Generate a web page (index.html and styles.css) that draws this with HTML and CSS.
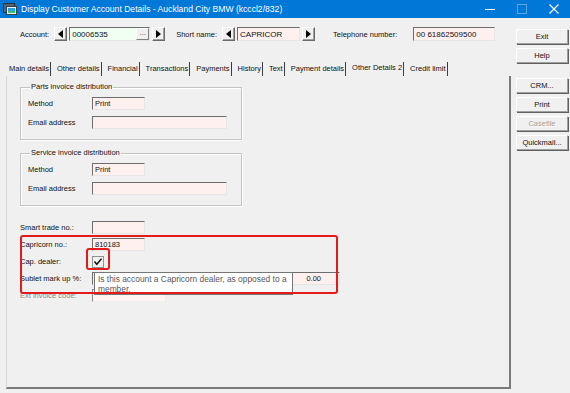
FILE: index.html
```html
<!DOCTYPE html>
<html>
<head>
<meta charset="utf-8">
<link rel="stylesheet" href="styles.css">
</head>
<body>
<div class="window">
  <div class="titlebar">
    <svg class="appicon" width="14" height="12" viewBox="0 0 14 12">
      <rect x="0.5" y="0.5" width="11" height="9" fill="#5a6470" stroke="#2a3038"/>
      <rect x="3.5" y="3.5" width="10" height="8" fill="#e8f4ff" stroke="#34404c"/>
      <rect x="5" y="5" width="7" height="5" fill="#2aa0e6"/>
      <rect x="5" y="8" width="7" height="2" fill="#3cc070"/>
    </svg>
    <span class="title">Display Customer Account Details - Auckland City BMW (kcccl2/832)</span>
    <div class="winctrls">
      <span class="wc"><svg width="10" height="10" viewBox="0 0 10 10"><line x1="0" y1="5.5" x2="10" y2="5.5" stroke="#fff" stroke-width="1"/></svg></span>
      <span class="wc"><svg width="10" height="10" viewBox="0 0 10 10"><rect x="0.5" y="0.5" width="9" height="9" fill="none" stroke="#5ea4e6" stroke-width="1"/></svg></span>
      <span class="wc"><svg width="10" height="10" viewBox="0 0 10 10"><path d="M0.5 0.5 L9.5 9.5 M9.5 0.5 L0.5 9.5" stroke="#fff" stroke-width="1.1"/></svg></span>
    </div>
  </div>

  <div class="client">
    <div class="main">
      <div class="toprow">
        <span class="lbl lbl-account">Account:</span>
        <span class="arrbtn"><svg width="5" height="8" viewBox="0 0 5 8"><polygon points="5,0 0,4 5,8" fill="#000"/></svg></span>
        <span class="field green acct">00006535<span class="dots">...</span></span>
        <span class="arrbtn"><svg width="5" height="8" viewBox="0 0 5 8"><polygon points="0,0 5,4 0,8" fill="#000"/></svg></span>
        <span class="lbl lbl-short">Short name:</span>
        <span class="arrbtn"><svg width="5" height="8" viewBox="0 0 5 8"><polygon points="5,0 0,4 5,8" fill="#000"/></svg></span>
        <span class="field short">CAPRICOR</span>
        <span class="arrbtn"><svg width="5" height="8" viewBox="0 0 5 8"><polygon points="0,0 5,4 0,8" fill="#000"/></svg></span>
        <span class="lbl lbl-tel">Telephone number:</span>
        <span class="field tel">00 61862509500</span>
      </div>

      <div class="tabs">
        <span class="tab first">Main details</span>
        <span class="tab">Other details</span>
        <span class="tab">Financial</span>
        <span class="tab">Transactions</span>
        <span class="tab">Payments</span>
        <span class="tab">History</span>
        <span class="tab">Text</span>
        <span class="tab">Payment details</span>
        <span class="tab active">Other Details 2</span>
        <span class="tab">Credit limit</span>
      </div>

      <div class="panel">
        <fieldset class="group">
          <legend>Parts invoice distribution</legend>
          <div class="grow"><span class="glbl">Method</span><span class="field method">Print</span></div>
          <div class="grow"><span class="glbl">Email address</span><span class="field email"></span></div>
        </fieldset>
        <fieldset class="group second">
          <legend>Service invoice distribution</legend>
          <div class="grow"><span class="glbl">Method</span><span class="field method">Print</span></div>
          <div class="grow"><span class="glbl">Email address</span><span class="field email"></span></div>
        </fieldset>

        <div class="rows">
          <div class="frow"><span class="flbl">Smart trade no.:</span><span class="field method"></span></div>
          <div class="frow"><span class="flbl">Capricorn no.:</span><span class="field method">810183</span></div>
          <div class="frow"><span class="flbl">Cap. dealer:</span>
            <svg class="check" width="12" height="12" viewBox="0 0 12 12">
              <rect x="0.5" y="0.5" width="11" height="11" fill="none" stroke="#333" stroke-width="1" stroke-dasharray="1 1"/>
              <path d="M2.5 5.5 L4.8 8.3 L9.5 2.8" fill="none" stroke="#111" stroke-width="1.4"/>
            </svg>
          </div>
          <div class="frow sublet"><span class="flbl">Sublet mark up %:</span><span class="field wide"><span class="val">0.00</span></span>
            <div class="tooltip">Is this account a Capricorn dealer, as opposed to a<br>member.</div>
          </div>
          <div class="frow"><span class="flbl dim">Ext invoice code:</span><span class="field ext"></span></div>
        </div>

        <div class="redbox big"></div>
        <div class="redbox small"></div>
      </div>
    </div>

    <div class="side">
      <div class="btn exit">Exit</div>
      <div class="btn">Help</div>
      <div class="btn crm">CRM...</div>
      <div class="btn">Print</div>
      <div class="btn disabled">Casefile</div>
      <div class="btn">Quickmail...</div>
    </div>
  </div>
</div>
</body>
</html>
```

FILE: styles.css
```css
* { box-sizing: border-box; }
html, body { margin: 0; padding: 0; }
body {
  width: 570px;
  height: 393px;
  overflow: hidden;
  background: #f0f0f0;
  font-family: "Liberation Sans", Arial, sans-serif;
  font-size: 7.5px;
  color: #111;
}
.window { width: 570px; height: 393px; display: flex; flex-direction: column; }

.titlebar {
  height: 18px;
  background: #0078d7;
  display: flex;
  align-items: center;
  color: #fff;
  flex: none;
}
.appicon { margin-left: 3px; margin-right: 4px; }
.title { font-size: 8.6px; letter-spacing: 0; }
.winctrls { margin-left: auto; display: flex; }
.wc { width: 32px; height: 18px; display: flex; align-items: center; justify-content: center; }

.client { display: flex; padding-left: 6px; flex: 1; }
.main { width: 505px; display: flex; flex-direction: column; }

.toprow {
  margin-top: 9px;
  height: 14px;
  display: flex;
  align-items: center;
}
.lbl { white-space: nowrap; }
.lbl-account { margin-left: 14px; margin-right: 5px; }
.lbl-short { margin-left: 11px; margin-right: 5px; }
.lbl-tel { margin-left: 18px; margin-right: 16px; }

.arrbtn {
  width: 13px;
  height: 14px;
  border: 1px solid;
  border-color: #fff #696969 #696969 #fff;
  box-shadow: inset -1px -1px 0 #a0a0a0;
  background: #f0f0f0;
  display: flex;
  align-items: center;
  justify-content: center;
  flex: none;
}

.field {
  display: flex;
  align-items: center;
  height: 13px;
  border-style: solid;
  border-width: 1px;
  border-color: #6d6d6d #e6e6e6 #e6e6e6 #6d6d6d;
  background: #fff0f0;
  padding-left: 2px;
  white-space: nowrap;
  flex: none;
}
.toprow .field { height: 14px; font-size: 8px; margin: 0 2px; }
.green { background: #f0fff1; }
.acct { width: 81px; position: relative; }
.dots {
  margin-left: auto;
  width: 13px;
  height: 12px;
  border: 1px solid;
  border-color: #fff #808080 #808080 #fff;
  background: #f0f0f0;
  font-size: 7px;
  line-height: 8px;
  text-align: center;
  color: #333;
}
.short { width: 63px; }
.toprow .tel { width: 82px; margin-left: 0; }

.tabs {
  margin-top: 21px;
  height: 14px;
  display: flex;
  align-items: stretch;
}
.tab {
  padding: 0 1px 0 6px;
  line-height: 14px;
  border-right: 1px solid #3c3c3c;
  white-space: nowrap;
}
.tab.first { padding-left: 3px; }
.tab.active { line-height: 12px; }

.panel {
  position: relative;
  height: 313px;
  border-left: 1px solid #d8d8d8;
  border-right: 2px solid #7a7a7a;
  border-bottom: 2px solid #7a7a7a;
  padding: 6px 0 0 13px;
  display: flex;
  flex-direction: column;
}

.group {
  width: 222px;
  margin: 0;
  padding: 5px 7px 10px 7px;
  border: 1px solid #c4c4c4;
  box-shadow: inset 1px 1px 0 #fff, 1px 1px 0 #fff;
  display: flex;
  flex-direction: column;
  gap: 6px;
}
.group.second { margin-top: 8px; }
.group legend {
  padding: 0 1px;
  margin-left: 2px;
  line-height: 10px;
  font-size: 7.5px;
}
.grow { display: flex; align-items: center; height: 13px; }
.glbl { width: 64px; flex: none; }
.method { width: 53px; }
.email { width: 135px; }

.rows {
  margin-top: 15px;
  display: flex;
  flex-direction: column;
  gap: 4px;
}
.frow { display: flex; align-items: center; height: 13px; }
.flbl { width: 72px; flex: none; white-space: nowrap; }
.flbl.dim { color: #8c8c8c; }
.check { margin-top: 1px; }
.wide { width: 248px; }
.wide .val { margin-left: auto; margin-right: 18px; }
.ext { width: 74px; background: #fff4f4; border-color: #8a8a8a #eeeeee #eeeeee #8a8a8a; }

.sublet { position: relative; }
.tooltip {
  position: absolute;
  left: 74px;
  top: 0;
  width: 199px;
  background: #fff;
  border: 1px solid #767676;
  padding: 1px 3px 0 3px;
  font-family: "Liberation Sans", Arial, sans-serif;
  font-size: 8.4px;
  line-height: 10px;
  color: #575757;
  white-space: nowrap;
}

.redbox {
  position: absolute;
  border: 2px solid #e41b1b;
  border-radius: 3px;
}
.redbox.big { left: 13px; top: 159px; width: 318px; height: 59px; }
.redbox.small { left: 79px; top: 172px; width: 24px; height: 22px; }

.side {
  margin-left: 5px;
  width: 53px;
  display: flex;
  flex-direction: column;
  gap: 4px;
}
.btn {
  width: 52px;
  height: 15px;
  border: 1px solid;
  border-color: #fff #a0a0a0 #a0a0a0 #fff;
  box-shadow: 1px 1px 0 #606060;
  background: #f0f0f0;
  display: flex;
  align-items: center;
  justify-content: center;
  white-space: nowrap;
}
.btn.exit { margin-top: 11px; }
.btn.crm { margin-top: 11px; }
.btn.disabled { color: #a0a0a0; text-shadow: 1px 1px 0 #fff; }
```
